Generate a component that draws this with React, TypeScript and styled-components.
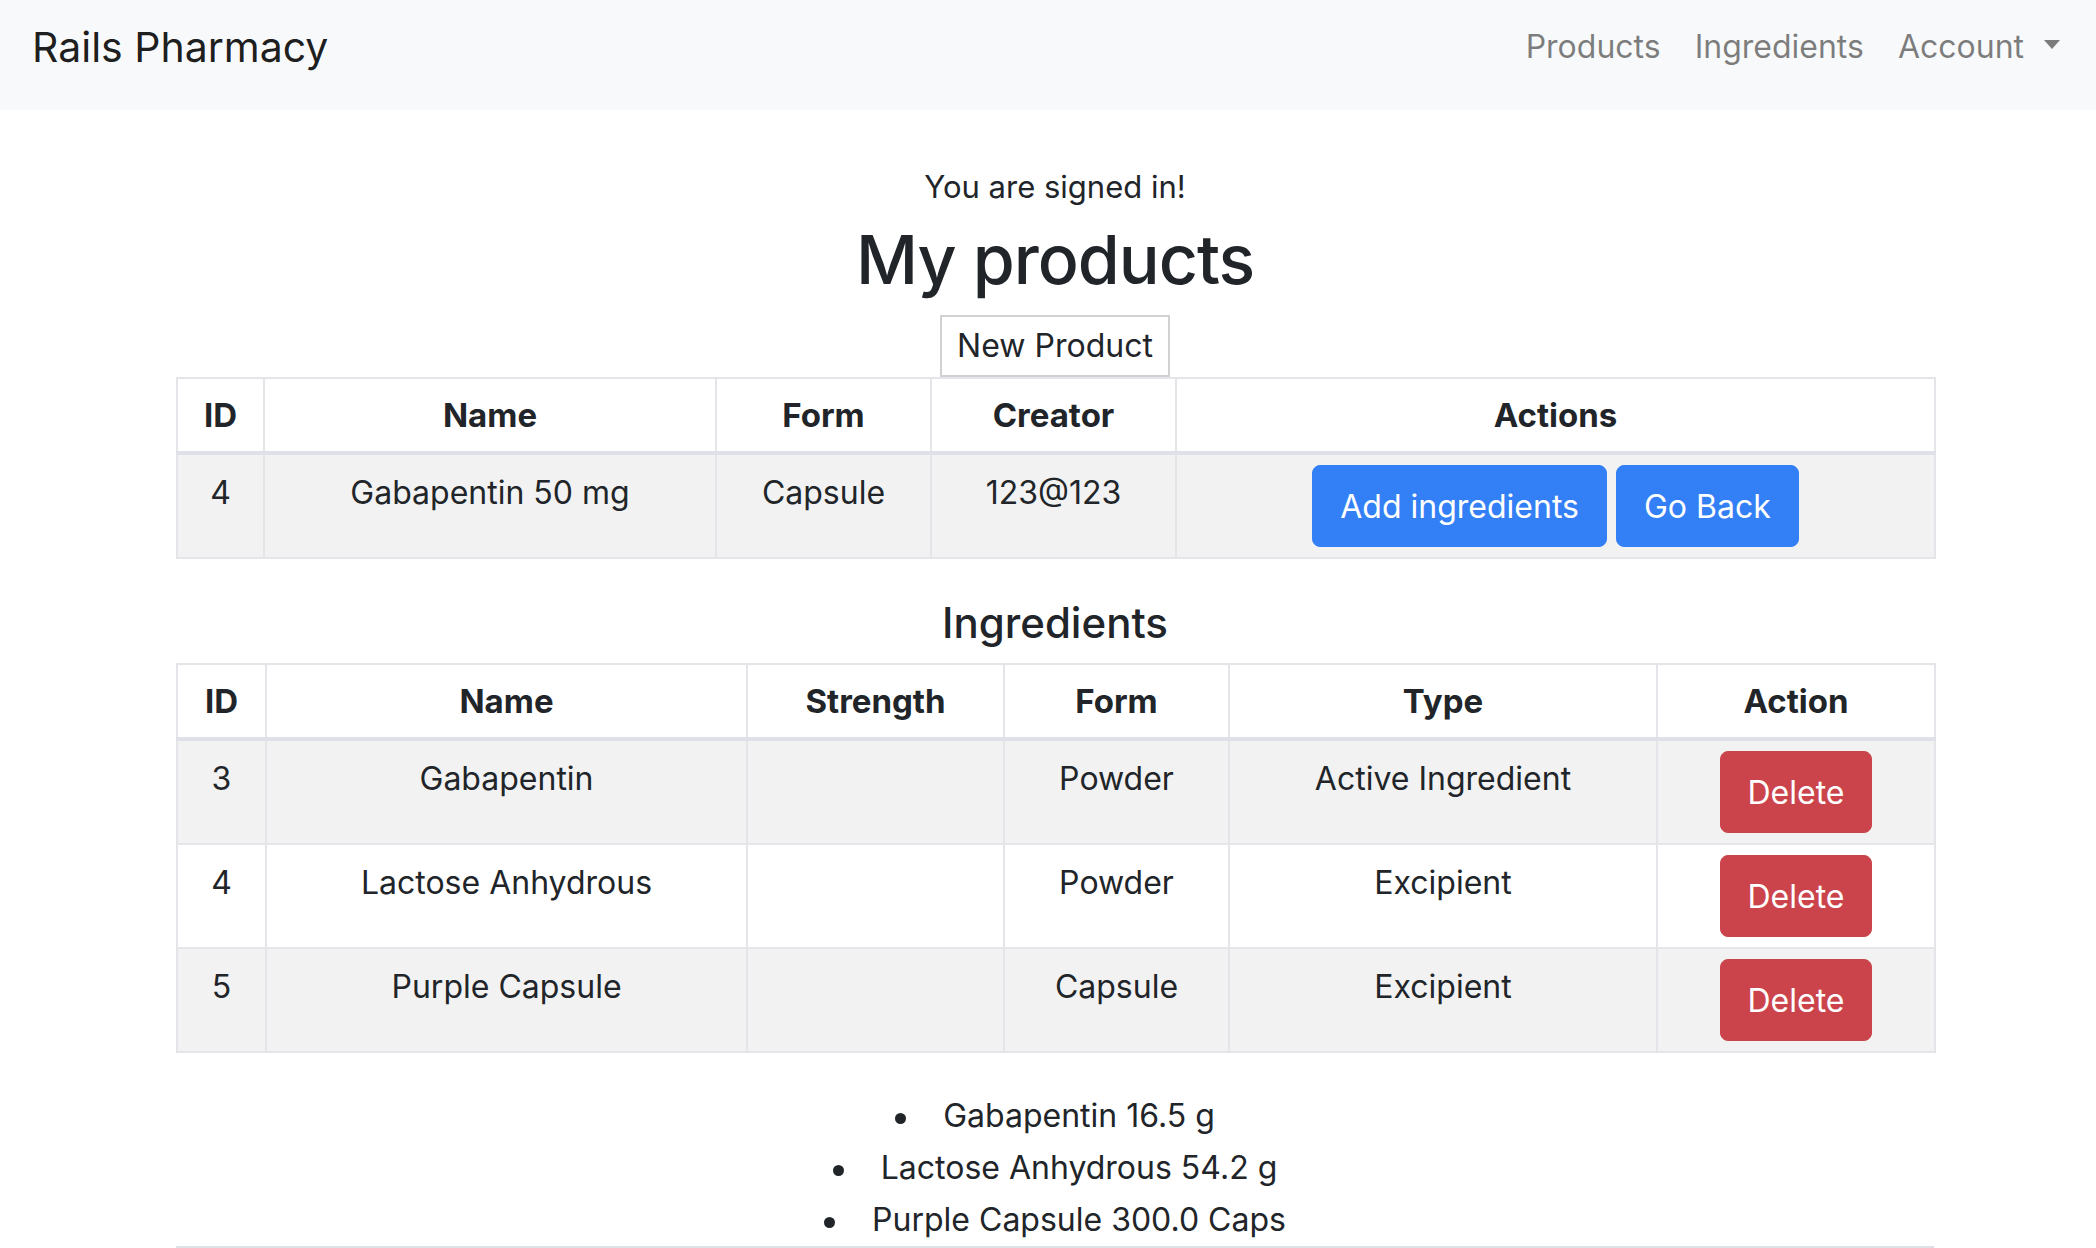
import React from 'react';
import styled, { createGlobalStyle } from 'styled-components';

const GlobalStyle = createGlobalStyle`
  html, body {
    margin: 0;
    padding: 0;
    background: #fff;
  }
  body {
    font-family: Inter, "Noto Sans", "Liberation Sans", sans-serif;
    font-size: 32px;
    line-height: 48px;
    color: #212529;
  }
  * { box-sizing: border-box; }
`;

// Top bar with brand and links
const Navbar = styled.nav`
  display: flex;
  align-items: center;
  justify-content: space-between;
  height: 110px;
  padding: 0 36px 16px 32px;
  background: #f8f9fa;
`;

const Brand = styled.a`
  font-size: 41px;
  line-height: 60px;
  color: rgba(0, 0, 0, 0.9);
  text-decoration: none;
`;

const NavLinks = styled.div`
  display: flex;
  align-items: center;
`;

const NavLink = styled.a`
  display: flex;
  align-items: center;
  padding: 0 17px;
  font-size: 32px;
  line-height: 48px;
  color: rgba(0, 0, 0, 0.5);
  text-decoration: none;
  &:last-child { padding-right: 0; }
`;

const Caret = styled.span`
  display: inline-block;
  margin-left: 20px;
  margin-top: -6px;
  border-top: 9px solid rgba(0, 0, 0, 0.5);
  border-left: 8.5px solid transparent;
  border-right: 8.5px solid transparent;
`;

const Main = styled.main`
  padding: 53px 162px 0 176px;
  text-align: center;
`;

const Notice = styled.p`
  margin: 0;
  font-size: 31px;
`;

const Title = styled.h1`
  margin: 0 0 8px;
  font-size: 68px;
  line-height: 96px;
  font-weight: 500;
  letter-spacing: -1px;
`;

const Subtitle = styled.h5`
  margin: 0 0 16px;
  font-size: 42px;
  line-height: 48px;
  font-weight: 500;
`;

const PlainButton = styled.button`
  display: block;
  margin: 0 auto;
  padding: 5px 15px;
  font: inherit;
  color: #212529;
  background: #fff;
  border: 2px solid #d0d1d3;
`;

const Table = styled.table<{ $gap: number }>`
  width: 100%;
  table-layout: fixed;
  border-collapse: collapse;
  margin-bottom: ${(p) => p.$gap}px;
  border: 2px solid #dee2e6;
`;

const Col = styled.col<{ $w: number }>`
  width: ${(p) => p.$w}px;
`;

const Th = styled.th`
  padding: 12px;
  font-weight: 700;
  font-size: 33px;
  text-align: center;
  border: 2px solid #e3e5e8;
  border-bottom: 4px solid #dee2e6;
`;

const Row = styled.tr<{ $striped: boolean }>`
  background: ${(p) => (p.$striped ? '#f2f2f2' : '#fff')};
`;

const Td = styled.td`
  padding: 10px;
  line-height: 56px;
  text-align: center;
  vertical-align: top;
  border: 2px solid #e3e5e8;
`;

const ActionButton = styled.a<{ $variant: 'primary' | 'danger' }>`
  display: inline-block;
  vertical-align: top;
  padding: 17px 27px 15px;
  border: 1px solid ${(p) => (p.$variant === 'primary' ? '#3380f6' : '#cc444b')};
  border-radius: 8px;
  background: ${(p) => (p.$variant === 'primary' ? '#3380f6' : '#cc444b')};
  color: #fff;
  line-height: 48px;
  text-decoration: none;
`;

const List = styled.ul`
  list-style: none;
  margin: 0;
  padding: 0;
`;

const Item = styled.li`
  line-height: 52px;
  &::before {
    content: '';
    display: inline-block;
    width: 11px;
    height: 11px;
    margin-right: 37px;
    border-radius: 50%;
    background: #212529;
    vertical-align: middle;
  }
`;

const Rule = styled.hr`
  margin: 0;
  border: 0;
  border-top: 2px solid #dee2e6;
`;

const ingredients = [
  { id: 3, name: 'Gabapentin', strength: '', form: 'Powder', type: 'Active Ingredient' },
  { id: 4, name: 'Lactose Anhydrous', strength: '', form: 'Powder', type: 'Excipient' },
  { id: 5, name: 'Purple Capsule', strength: '', form: 'Capsule', type: 'Excipient' },
];

const amounts = ['Gabapentin 16.5 g', 'Lactose Anhydrous 54.2 g', 'Purple Capsule 300.0 Caps'];

const App = (): JSX.Element => (
  <>
    <GlobalStyle />
    <Navbar>
      <Brand href="#">Rails Pharmacy</Brand>
      <NavLinks>
        <NavLink href="#">Products</NavLink>
        <NavLink href="#">Ingredients</NavLink>
        <NavLink href="#">Account<Caret /></NavLink>
      </NavLinks>
    </Navbar>

    <Main>
      <Notice>You are signed in!</Notice>
      <Title>My products</Title>
      <PlainButton>New Product</PlainButton>

      {/* Product summary */}
      <Table $gap={40}>
        <colgroup>
          <Col $w={87} />
          <Col $w={452} />
          <Col $w={215} />
          <Col $w={245} />
          <Col $w={759} />
        </colgroup>
        <thead>
          <tr>
            <Th>ID</Th>
            <Th>Name</Th>
            <Th>Form</Th>
            <Th>Creator</Th>
            <Th>Actions</Th>
          </tr>
        </thead>
        <tbody>
          <Row $striped>
            <Td>4</Td>
            <Td>Gabapentin 50 mg</Td>
            <Td>Capsule</Td>
            <Td>123@123</Td>
            <Td>
              <ActionButton $variant="primary" href="#">Add ingredients</ActionButton>
              {' '}
              <ActionButton $variant="primary" href="#">Go Back</ActionButton>
            </Td>
          </Row>
        </tbody>
      </Table>

      <Subtitle>Ingredients</Subtitle>
      <Table $gap={37}>
        <colgroup>
          <Col $w={89} />
          <Col $w={481} />
          <Col $w={257} />
          <Col $w={225} />
          <Col $w={428} />
          <Col $w={278} />
        </colgroup>
        <thead>
          <tr>
            <Th>ID</Th>
            <Th>Name</Th>
            <Th>Strength</Th>
            <Th>Form</Th>
            <Th>Type</Th>
            <Th>Action</Th>
          </tr>
        </thead>
        <tbody>
          {ingredients.map((ing, i) => (
            <Row key={ing.id} $striped={i % 2 === 0}>
              <Td>{ing.id}</Td>
              <Td>{ing.name}</Td>
              <Td>{ing.strength}</Td>
              <Td>{ing.form}</Td>
              <Td>{ing.type}</Td>
              <Td>
                <ActionButton $variant="danger" href="#">Delete</ActionButton>
              </Td>
            </Row>
          ))}
        </tbody>
      </Table>

      <List>
        {amounts.map((a) => <Item key={a}>{a}</Item>)}
      </List>
      <Rule />
    </Main>
  </>
);

export default App;
